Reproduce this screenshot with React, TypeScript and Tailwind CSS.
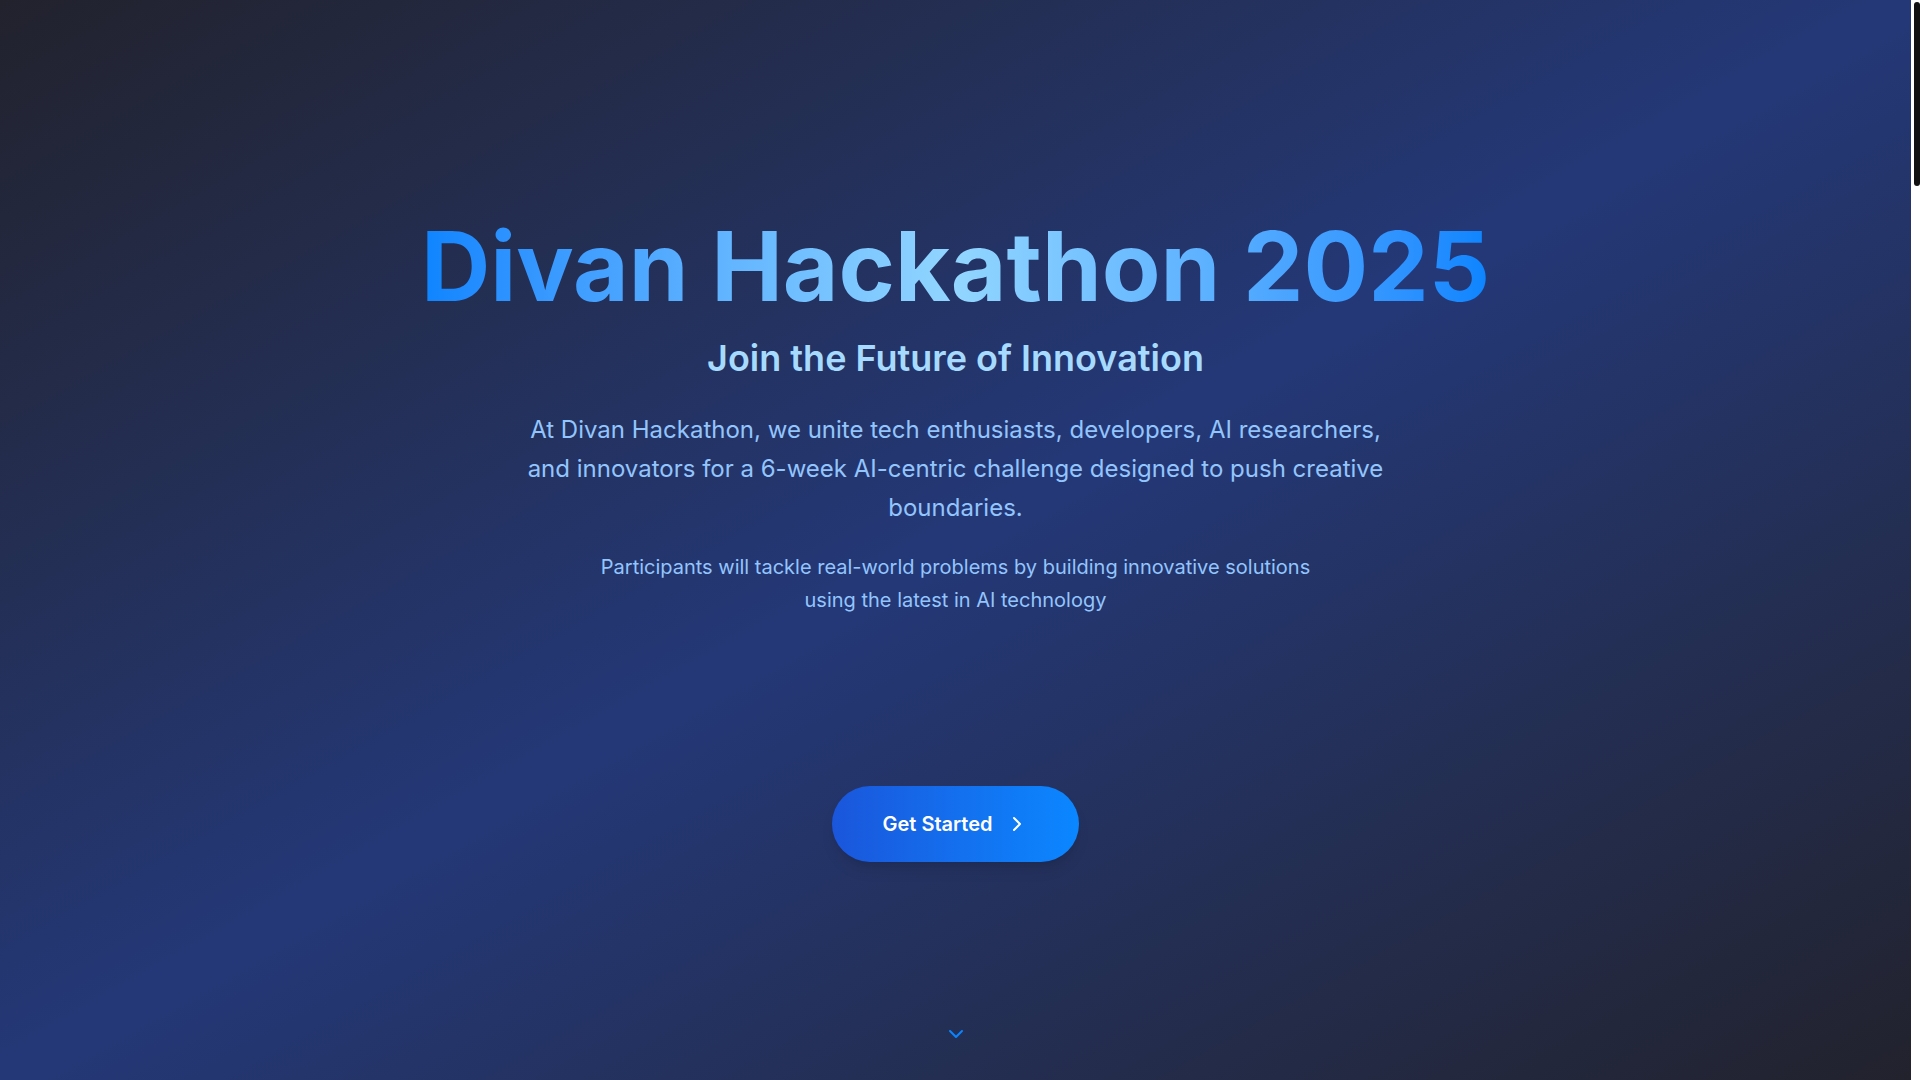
import { ChevronDown, ChevronRight } from 'lucide-react';

const App: React.FC = () => {
  return (
    <div className="flex h-screen font-['Inter',sans-serif]">
      <main className="flex-1 overflow-y-auto [scrollbar-width:none]">
        <section className="relative h-screen flex flex-col items-center justify-center px-4 text-center bg-gradient-to-br from-[#22222d] via-[#243878] to-[#22222d]">
          <h1 className="text-8xl font-bold bg-gradient-to-r from-[#0a84ff] via-[#92d6ff] to-[#0a84ff] bg-clip-text text-transparent">
            Divan Hackathon 2025
          </h1>
          <h2 className="mt-6 text-4xl font-semibold text-[#a6dbff]">
            Join the Future of Innovation
          </h2>
          <p className="mt-8 max-w-4xl text-2xl leading-relaxed text-[#93c5fd]">
            At Divan Hackathon, we unite tech enthusiasts, developers, AI researchers, and innovators for a 6-week
            AI-centric challenge designed to push creative boundaries.
          </p>
          <p className="mt-6 max-w-[730px] text-xl leading-relaxed text-[#93c5fd]">
            Participants will tackle real-world problems by building innovative solutions using the latest in AI technology
          </p>
          <button className="mt-[170px] flex items-center gap-3 px-[50px] py-6 rounded-full text-xl font-semibold text-white bg-gradient-to-r from-[#1a56dc] to-[#0a87ff] shadow-lg">
            Get Started
            <ChevronRight className="h-6 w-6" strokeWidth={2} />
          </button>
          <ChevronDown className="absolute bottom-[34px] left-1/2 -translate-x-1/2 h-6 w-6 text-[#0a84ff]" strokeWidth={2} />
        </section>
        <div className="h-[5200px] bg-[#22222d]" />
      </main>
      {/* page scrollbar */}
      <aside className="w-[9px] shrink-0 bg-white pt-[2px]">
        <div className="ml-[3px] h-[184px] w-[6px] rounded-full bg-[#111111]" />
      </aside>
    </div>
  );
};

export default App;
